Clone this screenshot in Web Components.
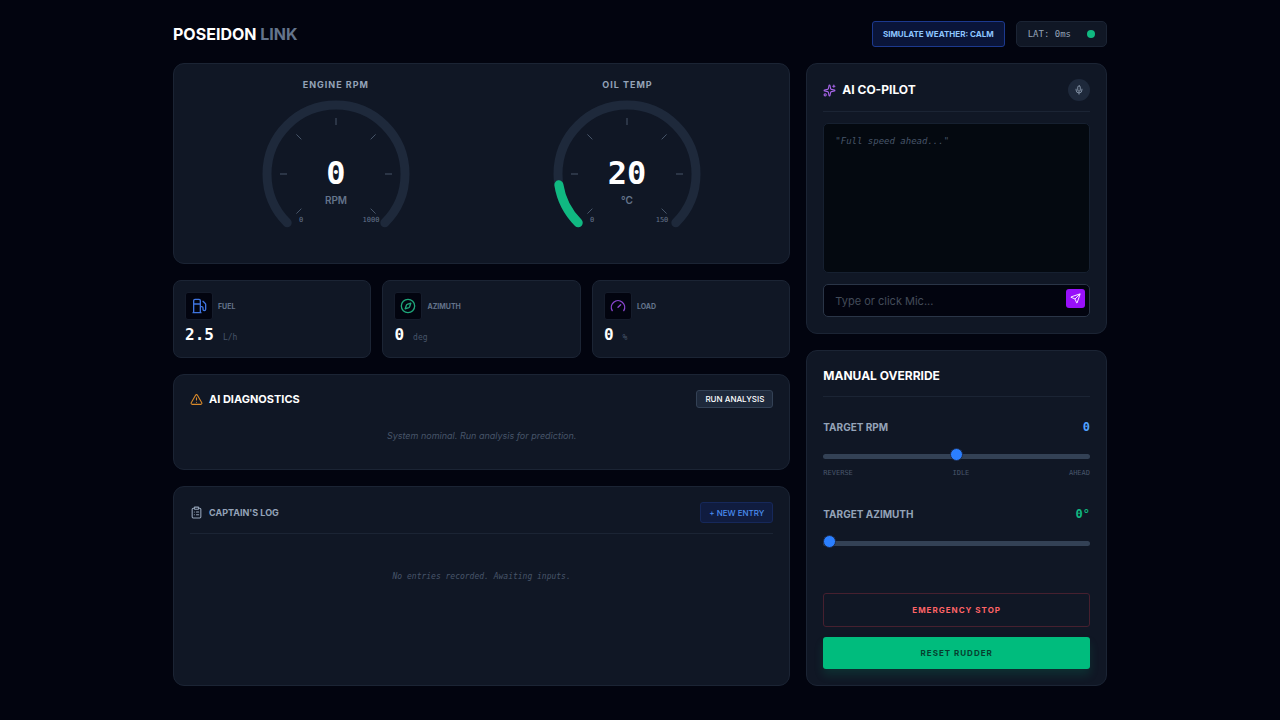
<!DOCTYPE html>
<html lang="en">
<head>
<meta charset="utf-8">
<meta name="viewport" content="width=device-width, initial-scale=1">
<title>Poseidon Link</title>
<style>
  :root {
    --page: #02040f;
    --card: #101725;
    --line: #1b2434;
    --track: #1e293b;
    --muted: #94a3b8;
    --dim: #64748b;
    --faint: #475569;
    --blue: #51a2ff;
    --green: #10b981;
    --sans: Inter, "Liberation Sans", sans-serif;
    --mono: "DejaVu Sans Mono", "Liberation Mono", monospace;
  }
  body {
    margin: 0;
    background: var(--page);
    color: #fff;
    font-family: var(--sans);
    font-size: 10px;
  }
</style>
</head>
<body>
<poseidon-app></poseidon-app>

<script>
const ICONS = {
  fuel: '<path d="M3 22h12M4 9h10M14 22V4a2 2 0 0 0-2-2H6a2 2 0 0 0-2 2v18M14 13h2a2 2 0 0 1 2 2v2a2 2 0 0 0 4 0V9.8a2 2 0 0 0-.6-1.4L18 5"/>',
  compass: '<circle cx="12" cy="12" r="10"/><path d="m16.2 7.8-1.8 5.4a2 2 0 0 1-1.2 1.2l-5.4 1.8 1.8-5.4a2 2 0 0 1 1.2-1.2z"/>',
  gauge: '<path d="m12 14 4-4M3.34 19a10 10 0 1 1 17.32 0"/>',
  alert: '<path d="m21.73 18-8-14a2 2 0 0 0-3.48 0l-8 14A2 2 0 0 0 4 21h16a2 2 0 0 0 1.73-3M12 9v4M12 17h.01"/>',
  clipboard: '<rect x="8" y="2" width="8" height="4" rx="1"/><path d="M16 4h2a2 2 0 0 1 2 2v14a2 2 0 0 1-2 2H6a2 2 0 0 1-2-2V6a2 2 0 0 1 2-2h2M12 11h4M12 16h4M8 11h.01M8 16h.01"/>',
  sparkles: '<path d="M11.02 2.81a1 1 0 0 1 1.96 0l1.05 5.56a2 2 0 0 0 1.6 1.6l5.56 1.05a1 1 0 0 1 0 1.96l-5.56 1.05a2 2 0 0 0-1.6 1.6l-1.05 5.56a1 1 0 0 1-1.96 0l-1.05-5.56a2 2 0 0 0-1.6-1.6l-5.56-1.05a1 1 0 0 1 0-1.96l5.56-1.05a2 2 0 0 0 1.6-1.6zM20 2v4M22 4h-4"/><circle cx="4" cy="20" r="2"/>',
  mic: '<path d="M12 19v3M19 10v2a7 7 0 0 1-14 0v-2"/><rect x="9" y="2" width="6" height="13" rx="3"/>',
  send: '<path d="M14.54 21.69a.5.5 0 0 0 .93-.03l6.5-19a.5.5 0 0 0-.63-.63l-19 6.5a.5.5 0 0 0-.03.93l7.93 3.18a2 2 0 0 1 1.11 1.11zM21.85 2.15 10.91 13.09"/>'
};

class UiIcon extends HTMLElement {
  constructor() {
    super();
    this.attachShadow({ mode: "open" });
  }

  connectedCallback() {
    const size = this.getAttribute("size") || 13;
    this.shadowRoot.innerHTML = `
      <style>
        :host { display: block; flex: none; }
        svg { display: block; fill: none; stroke: currentColor; stroke-width: 2; stroke-linecap: round; stroke-linejoin: round; }
      </style>
      <svg width="${size}" height="${size}" viewBox="0 0 24 24" aria-hidden="true">${ICONS[this.getAttribute("name")]}</svg>
    `;
  }
}
customElements.define("ui-icon", UiIcon);

class UiCard extends HTMLElement {
  constructor() {
    super();
    this.attachShadow({ mode: "open" });
  }

  connectedCallback() {
    this.shadowRoot.innerHTML = `
      <style>
        :host {
          display: block;
          box-sizing: border-box;
          padding: var(--card-pad, 15px 16px 16px);
          background: var(--card);
          border: 1px solid var(--line);
          border-radius: var(--card-radius, 11px);
        }
      </style>
      <slot></slot>
    `;
  }
}
customElements.define("ui-card", UiCard);

// Title row of a panel: icon + heading on the left, action on the right
class PanelHeader extends HTMLElement {
  constructor() {
    super();
    this.attachShadow({ mode: "open" });
  }

  connectedCallback() {
    this.shadowRoot.innerHTML = `
      <style>
        :host { display: flex; align-items: center; justify-content: space-between; }
        :host([divided]) { padding-bottom: 10px; border-bottom: 1px solid var(--line); }
        .title { display: flex; align-items: center; gap: 6px; }
        ::slotted(h2) { margin: 0; font-weight: 700; line-height: 20px; }
      </style>
      <div class="title"><slot name="icon"></slot><slot></slot></div>
      <slot name="action"></slot>
    `;
  }
}
customElements.define("panel-header", PanelHeader);

class DialGauge extends HTMLElement {
  constructor() {
    super();
    this.attachShadow({ mode: "open" });
  }

  // angle in degrees, clockwise from the right
  point(radius, angle) {
    const a = angle * Math.PI / 180;
    return (74 + radius * Math.cos(a)).toFixed(2) + " " + (74 + radius * Math.sin(a)).toFixed(2);
  }

  arc(from, to) {
    const large = to - from > 180 ? 1 : 0;
    return `M${this.point(69, from)}A69 69 0 ${large} 1 ${this.point(69, to)}`;
  }

  connectedCallback() {
    const value = Number(this.getAttribute("value"));
    const max = Number(this.getAttribute("max"));
    const label = this.getAttribute("label");
    const ticks = [135, 180, 225, 270, 315, 0, 45]
      .map(a => `M${this.point(49, a)}L${this.point(56, a)}`).join("");
    const fill = value > 0
      ? `<path class="fill" d="${this.arc(135, 135 + 270 * value / max)}"/>` : "";

    this.shadowRoot.innerHTML = `
      <style>
        :host { display: flex; flex-direction: column; align-items: center; gap: 10px; }
        h3 { margin: 0; font-size: 9px; line-height: 11px; font-weight: 700; letter-spacing: 1px; color: var(--muted); }
        svg { display: block; overflow: visible; }
        path { fill: none; stroke-linecap: round; }
        .ring { stroke: var(--track); stroke-width: 9; }
        .fill { stroke: var(--green); stroke-width: 9; }
        .ticks { stroke: var(--faint); stroke-width: 1; stroke-linecap: butt; }
        text { text-anchor: middle; }
        .value { font: 700 32px var(--mono); fill: #fff; }
        .unit { font: 600 10px var(--sans); fill: var(--dim); }
        .limit { font: 7px var(--mono); fill: var(--dim); }
      </style>
      <h3>${label}</h3>
      <svg width="148" height="147" viewBox="0 0 148 147" role="img" aria-label="${label}">
        <path class="ring" d="${this.arc(135, 405)}"/>
        ${fill}
        <path class="ticks" d="${ticks}"/>
        <text class="value" x="74" y="84">${value}</text>
        <text class="unit" x="74" y="104">${this.getAttribute("unit")}</text>
        <text class="limit" x="39" y="122">0</text>
        <text class="limit" x="109" y="122">${max}</text>
      </svg>
    `;
  }
}
customElements.define("dial-gauge", DialGauge);

class MetricCard extends HTMLElement {
  constructor() {
    super();
    this.attachShadow({ mode: "open" });
  }

  connectedCallback() {
    this.shadowRoot.innerHTML = `
      <style>
        :host { display: block; --card-pad: 11px; --card-radius: 8px; }
        .head { display: flex; align-items: center; gap: 5px; margin-bottom: 4px; }
        .icon { padding: 5px; background: var(--page); border: 1px solid #151c2b; border-radius: 3px; color: ${this.getAttribute("color")}; }
        .label { font-size: 7px; font-weight: 700; color: var(--dim); }
        .reading { display: flex; align-items: baseline; gap: 9px; font-family: var(--mono); }
        .value { font-size: 16px; line-height: 22px; font-weight: 700; }
        .unit { font-size: 8px; line-height: 10px; color: var(--faint); }
      </style>
      <ui-card>
        <div class="head">
          <div class="icon"><ui-icon name="${this.getAttribute("icon")}" size="16"></ui-icon></div>
          <span class="label">${this.getAttribute("label")}</span>
        </div>
        <div class="reading">
          <span class="value">${this.getAttribute("value")}</span>
          <span class="unit">${this.getAttribute("unit")}</span>
        </div>
      </ui-card>
    `;
  }
}
customElements.define("metric-card", MetricCard);

class RangeControl extends HTMLElement {
  constructor() {
    super();
    this.attachShadow({ mode: "open" });
  }

  connectedCallback() {
    const suffix = this.getAttribute("suffix") || "";
    const marks = this.getAttribute("marks");
    this.shadowRoot.innerHTML = `
      <style>
        :host { display: block; }
        .row { display: flex; align-items: center; justify-content: space-between; height: 14px; }
        label { font-size: 10px; font-weight: 700; color: var(--muted); }
        output { font: 700 12px/14px var(--mono); color: ${this.getAttribute("color")}; }
        input { -webkit-appearance: none; appearance: none; display: block; width: 100%; height: 5px; margin: 20px 0 0; background: #334155; border-radius: 4px; cursor: pointer; }
        input::-webkit-slider-runnable-track { height: 5px; }
        input::-webkit-slider-thumb { -webkit-appearance: none; width: 13px; height: 13px; margin-top: -6px; background: #2b7fff; border: 1px solid #1b2b4d; border-radius: 50%; }
        .marks { display: flex; justify-content: space-between; margin-top: 10px; font: 7px/9px var(--mono); color: var(--faint); }
      </style>
      <div class="row">
        <label for="range">${this.getAttribute("label")}</label>
        <output for="range"></output>
      </div>
      <input id="range" type="range" min="${this.getAttribute("min")}" max="${this.getAttribute("max")}" value="0">
      ${marks ? `<div class="marks">${marks.split(",").map(m => `<span>${m}</span>`).join("")}</div>` : ""}
    `;

    const input = this.shadowRoot.querySelector("input");
    const output = this.shadowRoot.querySelector("output");
    const update = () => { output.textContent = input.value + suffix; };
    input.addEventListener("input", update);
    update();
  }
}
customElements.define("range-control", RangeControl);

class AppHeader extends HTMLElement {
  constructor() {
    super();
    this.attachShadow({ mode: "open" });
  }

  connectedCallback() {
    this.shadowRoot.innerHTML = `
      <style>
        :host { display: flex; align-items: center; justify-content: space-between; }
        h1 { margin: 0; font-size: 16px; line-height: 24px; font-weight: 700; }
        h1 span { color: var(--dim); }
        .actions { display: flex; gap: 11px; }
        button { height: 26px; padding: 0 10px; background: #0a1539; border: 1px solid #1c398e; border-radius: 3px; color: #8ec5ff; font: 700 8px var(--sans); cursor: pointer; }
        .latency { display: flex; align-items: center; gap: 16px; box-sizing: border-box; height: 26px; padding: 0 11px; background: var(--card); border: 1px solid var(--line); border-radius: 5px; color: var(--muted); font: 9px var(--mono); }
        .dot { width: 8px; height: 8px; border-radius: 50%; background: var(--green); }
      </style>
      <h1>POSEIDON <span>LINK</span></h1>
      <div class="actions">
        <button type="button">SIMULATE WEATHER: CALM</button>
        <div class="latency"><span>LAT: 0ms</span><span class="dot"></span></div>
      </div>
    `;
  }
}
customElements.define("app-header", AppHeader);

class DiagnosticsPanel extends HTMLElement {
  constructor() {
    super();
    this.attachShadow({ mode: "open" });
  }

  connectedCallback() {
    this.shadowRoot.innerHTML = `
      <style>
        :host { display: block; }
        h2 { font-size: 11px; line-height: 18px; }
        ui-icon { color: #d98a2b; }
        button { height: 18px; padding: 0 8px; background: var(--track); border: 1px solid #334155; border-radius: 3px; color: #fff; font: 500 8px var(--sans); cursor: pointer; }
        p { margin: 11px 0 0; padding: 10px; color: var(--faint); font-size: 9px; line-height: 14px; font-style: italic; text-align: center; }
      </style>
      <ui-card>
        <panel-header>
          <ui-icon slot="icon" name="alert"></ui-icon>
          <h2>AI DIAGNOSTICS</h2>
          <button slot="action" type="button">RUN ANALYSIS</button>
        </panel-header>
        <p>System nominal. Run analysis for prediction.</p>
      </ui-card>
    `;
  }
}
customElements.define("diagnostics-panel", DiagnosticsPanel);

class LogPanel extends HTMLElement {
  constructor() {
    super();
    this.attachShadow({ mode: "open" });
  }

  connectedCallback() {
    this.shadowRoot.innerHTML = `
      <style>
        :host { display: grid; }
        ui-icon, h2 { color: var(--muted); }
        h2 { font-size: 9px; }
        button { height: 21px; padding: 0 8px; background: #101c3f; border: 1px solid #16285a; border-radius: 3px; color: #4a8df0; font: 500 8px var(--sans); cursor: pointer; }
        p { margin: 37px 0; color: var(--faint); font: italic 8px/12px var(--mono); text-align: center; }
      </style>
      <ui-card>
        <panel-header divided>
          <ui-icon slot="icon" name="clipboard"></ui-icon>
          <h2>CAPTAIN'S LOG</h2>
          <button slot="action" type="button">+ NEW ENTRY</button>
        </panel-header>
        <p>No entries recorded. Awaiting inputs.</p>
      </ui-card>
    `;
  }
}
customElements.define("log-panel", LogPanel);

class CopilotPanel extends HTMLElement {
  constructor() {
    super();
    this.attachShadow({ mode: "open" });
  }

  connectedCallback() {
    this.shadowRoot.innerHTML = `
      <style>
        :host { display: block; }
        h2 { font-size: 12px; }
        panel-header > ui-icon { color: #a865ea; }
        button { display: grid; place-items: center; padding: 0; border: 0; cursor: pointer; }
        .mic { width: 22px; height: 22px; background: var(--track); border-radius: 50%; color: var(--muted); }
        .chat { box-sizing: border-box; min-height: 150px; margin: 11px 0; padding: 11px; background: #040910; border: 1px solid #162030; border-radius: 5px; color: var(--faint); font: italic 9px/13px var(--mono); }
        form { position: relative; }
        input { display: block; box-sizing: border-box; width: 100%; height: 33px; padding: 0 30px 0 11px; background: var(--page); border: 1px solid #2a3547; border-radius: 5px; color: #fff; font: 11px var(--sans); }
        input::placeholder { color: #434b59; }
        .send { position: absolute; top: 5px; right: 5px; width: 19px; height: 19px; background: #9810fa; border-radius: 3px; color: #fff; }
      </style>
      <ui-card>
        <panel-header divided>
          <ui-icon slot="icon" name="sparkles"></ui-icon>
          <h2>AI CO-PILOT</h2>
          <button slot="action" class="mic" type="button" aria-label="Speak"><ui-icon name="mic" size="10"></ui-icon></button>
        </panel-header>
        <div class="chat">"Full speed ahead..."</div>
        <form>
          <input type="text" placeholder="Type or click Mic..." aria-label="Command">
          <button class="send" type="button" aria-label="Send"><ui-icon name="send" size="11"></ui-icon></button>
        </form>
      </ui-card>
    `;
  }
}
customElements.define("copilot-panel", CopilotPanel);

class OverridePanel extends HTMLElement {
  constructor() {
    super();
    this.attachShadow({ mode: "open" });
  }

  connectedCallback() {
    this.shadowRoot.innerHTML = `
      <style>
        :host { display: grid; }
        h2 { font-size: 12px; }
        .sliders { display: grid; gap: 29px; margin: 23px 0 47px; }
        .buttons { display: grid; gap: 10px; }
        button { border-radius: 3px; font: 700 8px var(--sans); letter-spacing: 1px; cursor: pointer; }
        .stop { height: 34px; background: none; border: 1px solid #46202f; color: #ff6467; }
        .reset { height: 32px; background: #00bc7d; border: 0; color: #063f2f; box-shadow: 0 6px 10px rgba(0, 188, 125, 0.15); }
      </style>
      <ui-card>
        <panel-header divided><h2>MANUAL OVERRIDE</h2></panel-header>
        <div class="sliders">
          <range-control label="TARGET RPM" min="-1000" max="1000" color="var(--blue)" marks="REVERSE,IDLE,AHEAD"></range-control>
          <range-control label="TARGET AZIMUTH" min="0" max="360" suffix="°" color="var(--green)"></range-control>
        </div>
        <div class="buttons">
          <button class="stop" type="button">EMERGENCY STOP</button>
          <button class="reset" type="button">RESET RUDDER</button>
        </div>
      </ui-card>
    `;
  }
}
customElements.define("override-panel", OverridePanel);

class PoseidonApp extends HTMLElement {
  constructor() {
    super();
    this.attachShadow({ mode: "open" });
  }

  connectedCallback() {
    this.shadowRoot.innerHTML = `
      <style>
        :host { display: block; box-sizing: border-box; max-width: 966px; margin: 0 auto; padding: 21px 16px 34px; }
        main { display: grid; grid-template-columns: repeat(12, minmax(0, 1fr)); gap: 16px; margin-top: 16px; }
        .left, .right { display: flex; flex-direction: column; gap: 16px; }
        .left { grid-column: span 8; }
        .right { grid-column: span 4; }
        .gauges { display: grid; grid-template-columns: 1fr 1fr; }
        .metrics { display: grid; grid-template-columns: repeat(3, 1fr); gap: 11px; }
        log-panel, override-panel { flex: 1; }
      </style>
      <app-header></app-header>
      <main>
        <div class="left">
          <ui-card>
            <div class="gauges">
              <dial-gauge label="ENGINE RPM" value="0" max="1000" unit="RPM"></dial-gauge>
              <dial-gauge label="OIL TEMP" value="20" max="150" unit="°C"></dial-gauge>
            </div>
          </ui-card>
          <div class="metrics">
            <metric-card icon="fuel" color="#3f74e0" label="FUEL" value="2.5" unit="L/h"></metric-card>
            <metric-card icon="compass" color="#1fa67a" label="AZIMUTH" value="0" unit="deg"></metric-card>
            <metric-card icon="gauge" color="#8b46d0" label="LOAD" value="0" unit="%"></metric-card>
          </div>
          <diagnostics-panel></diagnostics-panel>
          <log-panel></log-panel>
        </div>
        <div class="right">
          <copilot-panel></copilot-panel>
          <override-panel></override-panel>
        </div>
      </main>
    `;
  }
}
customElements.define("poseidon-app", PoseidonApp);
</script>
</body>
</html>
